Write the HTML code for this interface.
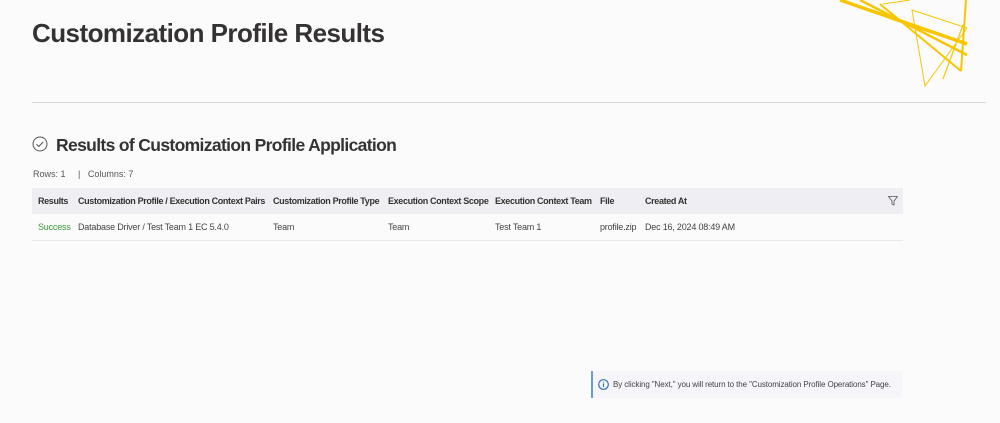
<!DOCTYPE html>
<html><head><meta charset="utf-8"><style>
body{margin:0;width:1000px;height:423px;background:#fcfbfc;font-family:"Liberation Sans",sans-serif;position:relative;overflow:hidden;color:#333}
h1{position:absolute;left:32px;top:18px;margin:0;font-size:26px;font-weight:bold;color:#353233;letter-spacing:-0.55px}
.hr{position:absolute;left:32px;top:102px;width:954px;height:1px;background:#d8d6d8}
h2{position:absolute;left:56px;top:135px;margin:0;font-size:17.5px;font-weight:bold;color:#333;letter-spacing:-0.65px}
.chk{position:absolute;left:32px;top:136px}
.meta{position:absolute;left:33px;top:169px;font-size:9px;color:#555}
table{position:absolute;left:32px;top:188px;width:871px;border-collapse:collapse;font-size:9px;table-layout:fixed}
th{background:#efeef2;height:26px;text-align:left;font-weight:bold;color:#333;padding:0 0 0 6px;white-space:nowrap;letter-spacing:-0.35px;overflow:hidden}
td{height:26px;padding:0 0 0 6px;border-bottom:1px solid #ebe9ec;color:#444;white-space:nowrap;letter-spacing:-0.2px;overflow:hidden}
.info{position:absolute;left:591px;top:371px;width:309px;height:27px;background:#f5f5fa;border-left:2px solid #6a9ad0;font-size:8px;color:#444;line-height:27px;letter-spacing:-0.1px}
.info svg{position:absolute;left:5px;top:8px}
.info span{position:absolute;left:20px;white-space:nowrap}
</style></head><body>
<svg style="position:absolute;left:820px;top:0" width="180" height="100">
<g fill="none" stroke="#f7c600">
<line x1="20" y1="0" x2="147" y2="44" stroke-width="3.5"/>
<line x1="40" y1="0" x2="147" y2="55" stroke-width="2.5"/>
<line x1="60" y1="4" x2="141" y2="71" stroke-width="2"/>
<polyline points="63,4 90,0" stroke-width="1"/>
<polygon points="92,10 147,28 105,86" stroke-width="1"/>
<line x1="146" y1="0" x2="141" y2="71" stroke-width="2"/>
<polyline points="143,25 123,79" stroke-width="1.2"/>
</g></svg>
<h1>Customization Profile Results</h1>
<div class="hr"></div>
<svg class="chk" width="16" height="16" viewBox="0 0 16 16"><circle cx="8" cy="8" r="7" fill="none" stroke="#555" stroke-width="1"/><path d="M4.5 8.2l2.3 2.3 4.5-4.6" fill="none" stroke="#555" stroke-width="1"/></svg>
<h2>Results of Customization Profile Application</h2>
<div class="meta">Rows: 1 &nbsp;&nbsp;&nbsp;&nbsp;| &nbsp;&nbsp;Columns: 7</div>
<table>
<colgroup><col style="width:40px"><col style="width:195px"><col style="width:115px"><col style="width:107px"><col style="width:105px"><col style="width:45px"><col></colgroup>
<tr><th>Results</th><th>Customization Profile / Execution Context Pairs</th><th>Customization Profile Type</th><th>Execution Context Scope</th><th>Execution Context Team</th><th>File</th><th>Created At<svg style="float:right;margin-right:5px" width="10" height="10" viewBox="0 0 10 10"><path d="M0.5 0.5h9L6 5v4L4 8V5z" fill="none" stroke="#555" stroke-width="0.8"/></svg></th></tr>
<tr><td style="color:#3a9a3a">Success</td><td>Database Driver / Test Team 1 EC 5.4.0</td><td>Team</td><td>Team</td><td>Test Team 1</td><td>profile.zip</td><td>Dec 16, 2024 08:49 AM</td></tr>
</table>
<div class="info"><svg width="11" height="11" viewBox="0 0 11 11"><circle cx="5.5" cy="5.5" r="4.8" fill="none" stroke="#3a72b8" stroke-width="1.2"/><path d="M5.5 4.5v3.5M5.5 2.7v0.9" stroke="#3a72b8" stroke-width="1.2"/></svg><span>By clicking "Next," you will return to the "Customization Profile Operations" Page.</span></div>
</body></html>
